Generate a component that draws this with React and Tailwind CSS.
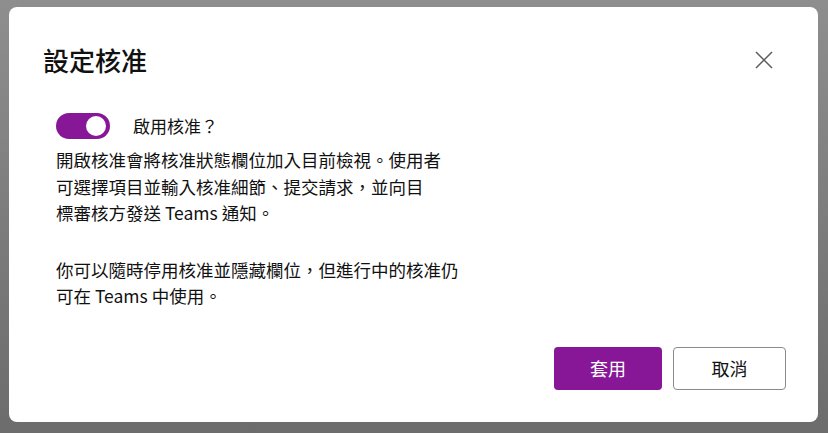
import React from 'react';

const font = { fontFamily: '"Noto Sans CJK TC", "Noto Sans", sans-serif' };

export default function App() {
  return (
    <div
      className="w-[828px] h-[433px] bg-gradient-to-b from-[#8e8e8e] to-[#6c6c6c] pt-[7px] pl-[9px] overflow-hidden"
      style={font}
    >
      <div className="w-[809px] h-[415px] bg-white rounded-[8px] flex flex-col">
        {/* Заголовок */}
        <div className="flex items-center justify-between pl-[34px] pr-[45px] pt-[37px]">
          <h1 className="text-[26px] leading-[32px] font-medium text-[#111]">設定核准</h1>
          <svg className="w-[18px] h-[18px] text-[#5c5c5c]" viewBox="0 0 18 18" fill="none" stroke="currentColor" strokeWidth={1.5}>
            <path d="M1 1l16 16M17 1L1 17" />
          </svg>
        </div>

        {/* Переключатель */}
        <div className="flex items-center ml-[47px] mt-[37px]">
          <div className="w-[54px] h-[26px] rounded-full bg-[#881798] flex items-center justify-end pr-[4px]">
            <div className="w-[20px] h-[20px] rounded-full bg-white" />
          </div>
          <span className="ml-[23px] text-[17px] leading-[26px] text-[#111]">啟用核准？</span>
        </div>

        {/* Текст */}
        <div className="ml-[47px] mt-[8px] text-[17.5px] leading-[26.5px] text-[#111]">
          <p>
            開啟核准會將核准狀態欄位加入目前檢視。使用者<br />
            可選擇項目並輸入核准細節、提交請求，並向目<br />
            標審核方發送 Teams 通知。
          </p>
          <p className="mt-[30px]">
            你可以隨時停用核准並隱藏欄位，但進行中的核准仍<br />
            可在 Teams 中使用。
          </p>
        </div>

        {/* Кнопки */}
        <div className="flex justify-end gap-[11px] pr-[32px] mt-[37px]">
          <button className="w-[108px] h-[43px] rounded-[4px] bg-[#881798] text-white text-[18px]">套用</button>
          <button className="w-[113px] h-[43px] rounded-[4px] border border-[#8a8a8a] bg-white text-[#111] text-[18px]">取消</button>
        </div>
      </div>
    </div>
  );
}
